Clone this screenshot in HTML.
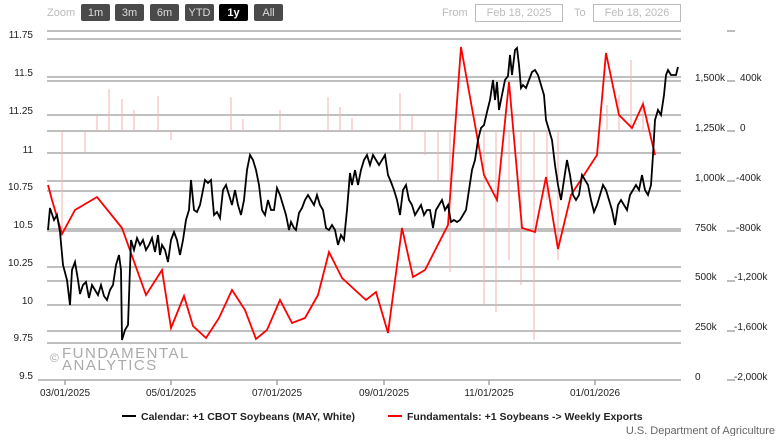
<!DOCTYPE html><html><head><meta charset="utf-8"><style>
body{margin:0;background:#fff;width:783px;height:436px;overflow:hidden;font-family:"Liberation Sans",sans-serif}
</style></head><body>
<svg width="783" height="436" xmlns="http://www.w3.org/2000/svg" font-family="Liberation Sans, sans-serif">
<g font-size="11">
<text x="47" y="16" fill="#bbb">Zoom</text>
<g fill="#4a4a4a"><rect x="81" y="4" width="29" height="17" rx="2"/><rect x="115" y="4" width="29" height="17" rx="2"/><rect x="150" y="4" width="29" height="17" rx="2"/><rect x="185" y="4" width="29" height="17" rx="2"/><rect x="254" y="4" width="29" height="17" rx="2"/></g>
<rect x="219" y="4" width="29" height="17" rx="2" fill="#000"/>
<g fill="#ddd" text-anchor="middle"><text x="95.5" y="16">1m</text><text x="129.5" y="16">3m</text><text x="164.5" y="16">6m</text><text x="199.5" y="16">YTD</text><text x="268.5" y="16">All</text></g>
<text x="233.5" y="16" fill="#fff" text-anchor="middle" font-weight="bold">1y</text>
<text x="442" y="16" fill="#bbb">From</text>
<rect x="475.5" y="4.5" width="87" height="17" fill="#fff" stroke="#bbb"/>
<text x="519" y="16" fill="#bbb" text-anchor="middle">Feb 18, 2025</text>
<text x="574" y="16" fill="#bbb">To</text>
<rect x="593.5" y="4.5" width="87" height="17" fill="#fff" stroke="#bbb"/>
<text x="637" y="16" fill="#bbb" text-anchor="middle">Feb 18, 2026</text>
</g>
<g stroke="#999" stroke-width="1.3">
<line x1="47" x2="681" y1="39" y2="39"/><line x1="47" x2="681" y1="77" y2="77"/><line x1="47" x2="681" y1="115" y2="115"/><line x1="47" x2="681" y1="153" y2="153"/><line x1="47" x2="681" y1="191" y2="191"/><line x1="47" x2="681" y1="229" y2="229"/><line x1="47" x2="681" y1="267" y2="267"/><line x1="47" x2="681" y1="305" y2="305"/><line x1="47" x2="681" y1="343" y2="343"/>
<line x1="47" x2="681" y1="31" y2="31"/><line x1="47" x2="681" y1="81" y2="81"/><line x1="47" x2="681" y1="131" y2="131"/><line x1="47" x2="681" y1="181" y2="181"/><line x1="47" x2="681" y1="231" y2="231"/><line x1="47" x2="681" y1="281" y2="281"/><line x1="47" x2="681" y1="331" y2="331"/>
<line x1="38" x2="681" y1="380" y2="380"/>
<line x1="65" x2="65" y1="380" y2="385"/><line x1="171" x2="171" y1="380" y2="385"/><line x1="277" x2="277" y1="380" y2="385"/><line x1="384" x2="384" y1="380" y2="385"/><line x1="489" x2="489" y1="380" y2="385"/><line x1="595" x2="595" y1="380" y2="385"/>
<line x1="727" x2="735" y1="31" y2="31"/><line x1="727" x2="735" y1="81" y2="81"/><line x1="727" x2="735" y1="131" y2="131"/><line x1="727" x2="735" y1="181" y2="181"/><line x1="727" x2="735" y1="231" y2="231"/><line x1="727" x2="735" y1="281" y2="281"/><line x1="727" x2="735" y1="331" y2="331"/><line x1="727" x2="735" y1="380" y2="380"/>
</g>
<g font-size="10" fill="#222" text-anchor="end">
<text x="33" y="38">11.75</text><text x="33" y="76">11.5</text><text x="33" y="114">11.25</text><text x="33" y="153">11</text><text x="33" y="190">10.75</text><text x="33" y="228">10.5</text><text x="33" y="266">10.25</text><text x="33" y="304">10</text><text x="33" y="341">9.75</text><text x="33" y="379">9.5</text>
</g>
<g font-size="10" fill="#222">
<text x="695" y="81">1,500k</text><text x="695" y="131">1,250k</text><text x="695" y="181">1,000k</text><text x="695" y="231">750k</text><text x="695" y="280">500k</text><text x="695" y="330">250k</text><text x="695" y="380">0</text>
<text x="740" y="81">400k</text><text x="740" y="131">0</text><text x="736" y="181">-400k</text><text x="736" y="231">-800k</text><text x="734" y="280">-1,200k</text><text x="734" y="330">-1,600k</text><text x="734" y="380">-2,000k</text>
</g>
<g font-size="10" fill="#222" text-anchor="middle">
<text x="65" y="396">03/01/2025</text><text x="171" y="396">05/01/2025</text><text x="277" y="396">07/01/2025</text><text x="384" y="396">09/01/2025</text><text x="489" y="396">11/01/2025</text><text x="595" y="396">01/01/2026</text>
</g>
<g stroke="#f7b0b0" stroke-width="1">
<path d="M97 131V115M109 131V89M122 131V99M134 131V110M158 131V96M62 131V232M85 131V152M171 131V140M231 131V97M243 131V119M280 131V110M328 131V97M340 131V107M352 131V118M400 131V93M412 131V115M425 131V155M438 131V180M450 131V272M484 131V305M496 131V312M509 131V260M521 131V285M534 131V340M547 131V200M558 131V260M607 131V105M619 131V95M631 131V60M643 131V100"/>
</g>
<polyline fill="none" stroke="#f00" stroke-width="1.8" points="48,185 52,200 62,234 75,210 97,197 122,228 146,295 162,270 171,328 184,296 193,326 206,338 219,318 232,290 245,310 256,339 267,330 280,300 292,323 305,318 318,295 329,252 342,278 355,290 366,300 376,292 388,333 402,228 413,277 425,270 448,225 461,47 484,175 497,200 509,82 522,228 535,232 546,177 558,249 571,195 597,155 606,53 619,115 632,128 643,104 655,155"/>
<polyline fill="none" stroke="#000" stroke-width="1.8" points="48,230 50,208 54,220 57,215 60,232 63,265 67,280 70,305 72,270 75,262 78,280 80,294 83,285 86,282 89,298 92,285 95,290 98,295 101,285 104,296 107,300 110,290 113,285 116,265 119,255 121,270 122,340 125,330 128,325 131,240 134,250 137,238 140,245 143,240 146,250 149,245 152,238 155,252 158,235 160,255 162,245 165,250 168,262 171,240 174,232 177,240 180,255 183,240 186,220 189,210 191,180 194,210 197,212 200,205 203,190 205,180 208,183 211,180 214,215 217,212 220,218 223,190 226,185 229,195 232,205 235,190 238,205 241,215 244,200 247,170 250,155 253,160 256,170 259,185 262,210 265,215 268,200 271,210 274,210 277,188 280,195 283,205 286,215 289,230 291,222 294,228 296,230 299,213 302,208 305,200 308,195 311,200 314,205 317,195 320,205 323,210 326,228 329,230 332,225 335,230 338,245 341,235 344,240 347,210 350,173 352,185 355,170 358,185 361,170 364,160 367,155 370,165 373,155 376,160 379,165 382,160 385,155 388,175 391,182 394,190 397,200 400,215 403,190 406,185 409,200 412,205 415,215 418,210 421,205 424,215 427,210 430,210 433,228 436,210 439,205 442,200 445,210 448,205 451,222 454,220 457,222 460,220 463,215 466,210 469,190 472,170 475,160 478,140 481,128 484,125 487,112 490,100 493,80 495,100 497,82 499,110 502,95 505,80 508,76 510,55 512,75 515,50 517,48 519,65 521,88 523,85 526,88 529,80 532,72 535,70 538,75 541,85 544,95 546,120 549,130 552,140 555,165 558,185 561,200 564,180 567,160 570,175 573,195 576,200 579,195 582,175 585,180 588,185 591,200 594,212 597,205 600,195 603,185 606,190 609,200 612,210 615,225 618,205 621,200 624,205 627,210 630,195 633,190 636,185 639,190 642,175 645,190 648,195 651,185 653,155 655,120 658,110 661,115 664,95 666,75 668,70 671,75 676,75 678,67"/>
<g fill="#aaa" font-size="15" letter-spacing="1.5">
<text x="50" y="362" font-size="12">©</text>
<text x="62" y="358">FUNDAMENTAL</text><text x="62" y="370">ANALYTICS</text>
</g>
<g font-size="10.5" font-weight="bold" fill="#222">
<line x1="122" x2="136" y1="416" y2="416" stroke="#000" stroke-width="2"/>
<text x="141" y="420">Calendar: +1 CBOT Soybeans (MAY, White)</text>
<line x1="388" x2="402" y1="416" y2="416" stroke="#f00" stroke-width="2"/>
<text x="407" y="420">Fundamentals: +1 Soybeans -&gt; Weekly Exports</text>
</g>
<text x="775" y="434" font-size="11" fill="#666" text-anchor="end">U.S. Department of Agriculture</text>
</svg>
</body></html>
